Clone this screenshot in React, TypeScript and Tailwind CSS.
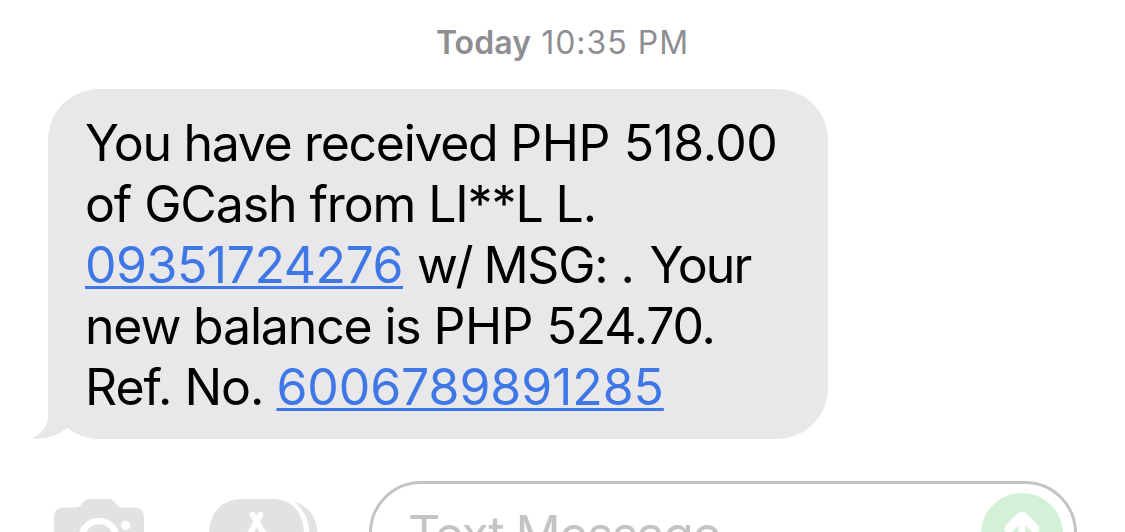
type Part = { text: string; cls: string; link?: boolean };

const lines: Part[][] = [
  [
    { text: "You have received ", cls: "tracking-[-1.32px]" },
    { text: "PHP ", cls: "tracking-[-0.4px]" },
    { text: "518.00", cls: "tracking-[-0.5px]" },
  ],
  [{ text: "of GCash from LI**L L.", cls: "tracking-[-1.12px]" }],
  [
    { text: "09351724276", cls: "tracking-[-0.5px]", link: true },
    { text: " ", cls: "tracking-[0px]" },
    { text: "w/", cls: "tracking-[-2.6px]" },
    { text: " ", cls: "tracking-[-1.5px]" },
    { text: "MSG: ", cls: "tracking-[-1.2px]" },
    { text: ". ", cls: "tracking-[0.3px]" },
    { text: "Your", cls: "tracking-[-1.9px]" },
  ],
  [
    { text: "new balance is ", cls: "tracking-[-1.17px]" },
    { text: "PHP ", cls: "tracking-[-0.5px]" },
    { text: "524.70.", cls: "tracking-[-1.2px]" },
  ],
  [
    { text: "Ref. No. ", cls: "tracking-[-1.05px]" },
    { text: "6006789891285", cls: "tracking-[-0.1px]", link: true },
  ],
];

function CameraIcon() {
  return (
    <svg className="block h-[76px] w-[92px] shrink-0" viewBox="0 0 92 76" fill="none">
      <path d="M10 8.500h11c3 0 4.500-.8 6.200-2.800l2.300-2.900C31.200.8 32.500 0 35 0h20c2.500 0 3.800.8 5.500 2.800l2.300 2.900C64.500 7.700 66 8.500 69 8.500h11c7 0 10 3.500 10 10.500v42c0 7-3 10.500-10 10.500H10C3 71.500 0 68 0 61V19C0 12 3 8.500 10 8.500Z" fill="#e2e2e2" />
      <circle cx="45" cy="39.500" r="17.500" stroke="#fff" strokeWidth="6.500" />
      <circle cx="71.700" cy="26.500" r="4.700" fill="#fff" />
    </svg>
  );
}

function AppsIcon() {
  return (
    <svg className="block h-[76px] w-[110px] shrink-0" viewBox="0 0 110 76" fill="none">
      <path d="M32 0h32c20 0 31 15 31 36S84 72 64 72H32C12 72 0 57 0 36S12 0 32 0Z" fill="#e2e2e2" />
      <path d="M86 3c14 4 22.500 16 22.500 33S100 65 86 69c9-8 14.500-19 14.500-33S95 11 86 3Z" fill="#e2e2e2" />
      <path d="M51.500 15.500 38 40M43.500 15.500 58 40" stroke="#fff" strokeWidth="5.800" strokeLinecap="round" />
    </svg>
  );
}

export default function App() {
  return (
    <div className="flex h-[532px] w-[1125px] flex-col overflow-hidden bg-white font-['Inter',sans-serif]">
      <header className="flex h-[89px] shrink-0 justify-center pt-[23px] text-[32px] leading-[40px] text-[#8e8e92]">
        <p className="whitespace-pre">
          <span className="font-semibold tracking-[0.1px]">Today</span>
          <span className="tracking-[1px]"> 10:35 PM</span>
        </p>
      </header>
      <main className="relative ml-12 h-[350px] w-[780px] shrink-0 rounded-[51px] bg-[#e8e8eb] pt-[24px] pl-[37px]">
        <svg className="absolute bottom-0 left-[-16px] h-[60px] w-[60px]" viewBox="0 0 60 60">
          <path d="M16 0V38C16 48 9 55 0 59.500C13 61 26 57 36 48L60 30V0Z" fill="#e8e8eb" />
        </svg>
        <div className="relative text-[50px] leading-[61px] text-black">
          {lines.map((parts, row) => (
            <p key={row} className="whitespace-pre">
              {parts.map(({ text, cls, link }, i) =>
                link ? (
                  <a key={i} className={`text-[#3f78e6] underline decoration-[3px] underline-offset-[3px] [text-decoration-skip-ink:none] ${cls}`}>{text}</a>
                ) : (
                  <span key={i} className={cls}>{text}</span>
                ),
              )}
            </p>
          ))}
        </div>
      </main>
      <footer className="flex h-[93px] shrink-0 overflow-hidden pt-[42px]">
        <div className="flex w-[369px] shrink-0 gap-[63px] pt-[18px] pl-[54px]">
          <CameraIcon />
          <AppsIcon />
        </div>
        <div className="flex h-[105px] w-[708px] shrink-0 justify-between rounded-[52px] border-[3px] border-[#c3c3c3] pt-[9px] pr-[11px] pl-[36px]">
          <span className="pt-[11px] text-[50px] leading-[61px] tracking-[-1.5px] text-[#c4c4c6]">Text Message</span>
          <svg className="block h-[82px] w-[82px]" viewBox="0 0 82 82" fill="none">
            <circle cx="41" cy="41" r="41" fill="#d2f1d6" />
            <path d="M28 35.500 41 22.500l13 13" stroke="#fff" strokeWidth="9" strokeLinecap="round" strokeLinejoin="bevel" />
            <path d="M41 62V25" stroke="#fff" strokeWidth="7" />
          </svg>
        </div>
      </footer>
    </div>
  );
}
